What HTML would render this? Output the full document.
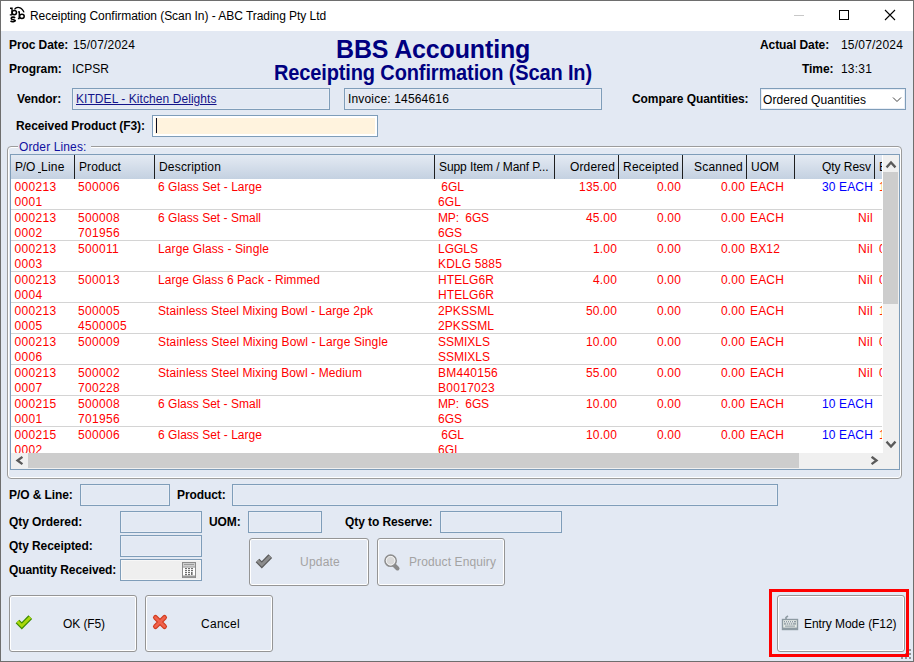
<!DOCTYPE html>
<html><head><meta charset="utf-8"><title>Receipting Confirmation</title><style>
*{margin:0;padding:0;box-sizing:border-box}
html,body{width:914px;height:662px;overflow:hidden;background:#e3e9f3}
body{position:relative;font-family:"Liberation Sans",sans-serif;font-size:12px;color:#000}
.a{position:absolute}
.t{position:absolute;white-space:nowrap;font-size:12px;line-height:14px}
.b{font-weight:bold}
.fld{position:absolute;border:1px solid #7f9db9;background:#e3e9f3;box-shadow:inset 0 0 0 1px #e9eef6}
.btn{position:absolute;border:1px solid #959595;border-radius:3px;box-shadow:inset 0 0 0 1px #fff;background:#e3e9f3}
.r{color:#ff0000}
.bl{color:#0000ff}
.o{color:#ff2a00}
</style></head><body>
<div class="a" style="left:0;top:0;width:914px;height:662px;border:1px solid #6e6e6e"></div>
<div class="a" style="left:1px;top:1px;width:912px;height:30px;background:#fff"></div>
<svg class="a" style="left:0;top:0" width="30" height="30" viewBox="0 0 30 30">
<g fill="none" stroke="#000" stroke-width="1.4">
<path d="M10 8.3H12V14.9M9.8 14.9H12.3"/>
<ellipse cx="14.3" cy="12.6" rx="2.2" ry="2.1" stroke-width="1.5"/>
<path d="M18 11.9H19.3V18.5M17.9 18.5H19.6"/>
<ellipse cx="21.9" cy="16.3" rx="2.3" ry="2.1" stroke-width="1.5"/>
<path d="M14.5 9.3C16.5 6.4 21.8 6.4 24 12.4" stroke-width="1.3"/>
<path d="M15 18C14.3 16.8 11.2 16.7 11.2 18.4S15.3 19.4 15.3 20.6 11.8 22.5 10.6 20.8" stroke-width="1.6"/>
</g></svg>
<div class="t" style="left:30px;top:9px;letter-spacing:-0.05px">Receipting Confirmation (Scan In) - ABC Trading Pty Ltd</div>
<div class="a" style="left:794px;top:15px;width:10px;height:1px;background:#c8c8c8"></div>
<div class="a" style="left:839px;top:10px;width:10px;height:10px;border:1px solid #000"></div>
<svg class="a" style="left:884px;top:9px" width="12" height="12" viewBox="0 0 12 12">
<path d="M1 1L11 11M11 1L1 11" stroke="#000" stroke-width="1.1"/></svg>
<div class="t b" style="left:9px;top:38px;letter-spacing:-0.08px;">Proc Date:</div>
<div class="t " style="left:73px;top:38px;letter-spacing:0.194px;">15/07/2024</div>
<div class="t b" style="left:9px;top:62px;letter-spacing:-0.08px;">Program:</div>
<div class="t " style="left:72px;top:62px;letter-spacing:0.065px;">ICPSR</div>
<div class="t b" style="left:336px;top:36px;font-size:25px;line-height:26px;letter-spacing:-0.15px;color:#000080">BBS Accounting</div>
<div class="t b" style="left:274px;top:62px;font-size:20px;line-height:22px;letter-spacing:-0.13px;color:#000080;transform:scaleY(1.07);transform-origin:0 17px">Receipting Confirmation (Scan In)</div>
<div class="t b" style="left:760px;top:38px;letter-spacing:-0.08px;">Actual Date:</div>
<div class="t " style="left:841px;top:38px;letter-spacing:0.194px;">15/07/2024</div>
<div class="t b" style="left:802px;top:62px;letter-spacing:-0.08px;">Time:</div>
<div class="t " style="left:841px;top:62px;letter-spacing:0.194px;">13:31</div>
<div class="t b" style="left:17px;top:92px;letter-spacing:-0.08px;">Vendor:</div>
<div class="fld" style="left:72px;top:88px;width:258px;height:22px"></div>
<div class="t " style="left:76px;top:92px;letter-spacing:0.064px;color:#14148a;text-decoration:underline">KITDEL - Kitchen Delights</div>
<div class="fld" style="left:344px;top:88px;width:258px;height:22px"></div>
<div class="t " style="left:348px;top:92px;letter-spacing:0.172px;">Invoice: 14564616</div>
<div class="t b" style="left:632px;top:92px;letter-spacing:-0.08px;">Compare Quantities:</div>
<div class="fld" style="left:760px;top:88px;width:146px;height:22px;background:#fff"></div>
<div class="t " style="left:763px;top:93px;letter-spacing:0.09px;">Ordered Quantities</div>
<svg class="a" style="left:892px;top:96px" width="10" height="8" viewBox="0 0 10 8">
<path d="M1 1.5l4 4 4-4" fill="none" stroke="#444" stroke-width="1"/></svg>
<div class="t b" style="left:16px;top:119px;letter-spacing:-0.08px;">Received Product (F3):</div>
<div class="fld" style="left:152px;top:115px;width:226px;height:22px;background:#fff3de;box-shadow:inset 0 0 0 2px #fff"></div>
<div class="a" style="left:156px;top:118px;width:1px;height:15px;background:#0a0a20"></div>
<div class="a" style="left:7px;top:146px;width:895px;height:333px;border:1px solid #9c9c9c;border-radius:4px;box-shadow:inset 0 0 0 1px #fff"></div>
<div class="a" style="left:18px;top:140px;width:73px;height:12px;background:#e3e9f3"></div>
<div class="t " style="left:19px;top:140px;letter-spacing:0.081px;color:#1010a0;letter-spacing:0.12px">Order Lines:</div>
<div class="a" style="left:10px;top:154px;width:890px;height:316px;border:1px solid #7f9db9;background:#fff"></div>
<div class="a" style="left:11px;top:155px;width:871px;height:24px;overflow:hidden;background:linear-gradient(#e4eaf3,#c4d1e1)">
<div class="a" style="left:63px;top:0;width:1px;height:24px;background:#1e1e1e"></div>
<div class="t" style="left:4px;top:5px;letter-spacing:-0.224px">P/O</div>
<div class="a" style="left:143px;top:0;width:1px;height:24px;background:#1e1e1e"></div>
<div class="t" style="left:68px;top:5px;letter-spacing:0.092px">Product</div>
<div class="a" style="left:423px;top:0;width:1px;height:24px;background:#1e1e1e"></div>
<div class="t" style="left:148px;top:5px;letter-spacing:0.18px">Description</div>
<div class="a" style="left:543px;top:0;width:1px;height:24px;background:#1e1e1e"></div>
<div class="t" style="left:428px;top:5px;letter-spacing:-0.082px">Supp Item / Manf P...</div>
<div class="a" style="left:607px;top:0;width:1px;height:24px;background:#1e1e1e"></div>
<div class="t" style="left:544px;top:5px;width:60px;text-align:right;letter-spacing:0.14px">Ordered</div>
<div class="a" style="left:671px;top:0;width:1px;height:24px;background:#1e1e1e"></div>
<div class="t" style="left:608px;top:5px;width:60px;text-align:right;letter-spacing:0.218px">Receipted</div>
<div class="a" style="left:735px;top:0;width:1px;height:24px;background:#1e1e1e"></div>
<div class="t" style="left:672px;top:5px;width:60px;text-align:right;letter-spacing:0.232px">Scanned</div>
<div class="a" style="left:783px;top:0;width:1px;height:24px;background:#1e1e1e"></div>
<div class="t" style="left:740px;top:5px;letter-spacing:0.001px">UOM</div>
<div class="a" style="left:863px;top:0;width:1px;height:24px;background:#1e1e1e"></div>
<div class="t" style="left:784px;top:5px;width:76px;text-align:right;letter-spacing:-0.043px">Qty Resv</div>
<div class="a" style="left:943px;top:0;width:1px;height:24px;background:#1e1e1e"></div>
<div class="t" style="left:868px;top:5px;letter-spacing:0.234px">Balance</div>
<div class="a" style="left:27px;top:17px;width:3px;height:1px;background:#111"></div>
<div class="t" style="left:30px;top:5px;letter-spacing:0.25px">Line</div>
</div>
<div class="a" style="left:11px;top:179px;width:871px;height:274px;overflow:hidden">
<div class="t r" style="left:3.5px;top:1px;letter-spacing:0.326px">000213</div>
<div class="t r" style="left:3.5px;top:16px;letter-spacing:0.326px">0001</div>
<div class="t r" style="left:67px;top:1px;letter-spacing:0.326px">500006</div>
<div class="t r" style="left:147px;top:1px;letter-spacing:0.032px">6 Glass Set - Large</div>
<div class="t r" style="left:427px;top:1px;letter-spacing:-0.004px">&nbsp;6GL</div>
<div class="t r" style="left:427px;top:16px;letter-spacing:0.106px">6GL</div>
<div class="t r" style="left:544px;top:1px;width:62px;text-align:right;letter-spacing:0.216px">135.00</div>
<div class="t r" style="left:608px;top:1px;width:62px;text-align:right;letter-spacing:0.161px">0.00</div>
<div class="t r" style="left:672px;top:1px;width:62px;text-align:right;letter-spacing:0.161px">0.00</div>
<div class="t r" style="left:739px;top:1px;letter-spacing:0.165px">EACH</div>
<div class="t bl" style="left:784px;top:1px;width:78px;text-align:right;letter-spacing:0.14px">30 EACH</div>
<div class="t o" style="left:868px;top:1px;letter-spacing:0.326px">1</div>
<div class="a" style="left:0;top:30px;width:872px;height:1px;background:#d4d4d4"></div>
<div class="t r" style="left:3.5px;top:32px;letter-spacing:0.326px">000213</div>
<div class="t r" style="left:3.5px;top:47px;letter-spacing:0.326px">0002</div>
<div class="t r" style="left:67px;top:32px;letter-spacing:0.326px">500008</div>
<div class="t r" style="left:67px;top:47px;letter-spacing:0.326px">701956</div>
<div class="t r" style="left:147px;top:32px;letter-spacing:0.016px">6 Glass Set - Small</div>
<div class="t r" style="left:427px;top:32px;letter-spacing:-0.127px">MP:&nbsp;&nbsp;6GS</div>
<div class="t r" style="left:427px;top:47px;letter-spacing:-0.004px">6GS</div>
<div class="t r" style="left:544px;top:32px;width:62px;text-align:right;letter-spacing:0.194px">45.00</div>
<div class="t r" style="left:608px;top:32px;width:62px;text-align:right;letter-spacing:0.161px">0.00</div>
<div class="t r" style="left:672px;top:32px;width:62px;text-align:right;letter-spacing:0.161px">0.00</div>
<div class="t r" style="left:739px;top:32px;letter-spacing:0.165px">EACH</div>
<div class="t r" style="left:784px;top:32px;width:78px;text-align:right;letter-spacing:0.334px">Nil</div>
<div class="a" style="left:0;top:61px;width:872px;height:1px;background:#d4d4d4"></div>
<div class="t r" style="left:3.5px;top:63px;letter-spacing:0.326px">000213</div>
<div class="t r" style="left:3.5px;top:78px;letter-spacing:0.326px">0003</div>
<div class="t r" style="left:67px;top:63px;letter-spacing:0.326px">500011</div>
<div class="t r" style="left:147px;top:63px;letter-spacing:0.114px">Large Glass - Single</div>
<div class="t r" style="left:427px;top:63px;letter-spacing:-0.004px">LGGLS</div>
<div class="t r" style="left:427px;top:78px;letter-spacing:0.144px">KDLG 5885</div>
<div class="t r" style="left:544px;top:63px;width:62px;text-align:right;letter-spacing:0.161px">1.00</div>
<div class="t r" style="left:608px;top:63px;width:62px;text-align:right;letter-spacing:0.161px">0.00</div>
<div class="t r" style="left:672px;top:63px;width:62px;text-align:right;letter-spacing:0.161px">0.00</div>
<div class="t r" style="left:739px;top:63px;letter-spacing:0.161px">BX12</div>
<div class="t r" style="left:784px;top:63px;width:78px;text-align:right;letter-spacing:0.334px">Nil</div>
<div class="t r" style="left:868px;top:63px;letter-spacing:0.326px">0</div>
<div class="a" style="left:0;top:92px;width:872px;height:1px;background:#d4d4d4"></div>
<div class="t r" style="left:3.5px;top:94px;letter-spacing:0.326px">000213</div>
<div class="t r" style="left:3.5px;top:109px;letter-spacing:0.326px">0004</div>
<div class="t r" style="left:67px;top:94px;letter-spacing:0.326px">500013</div>
<div class="t r" style="left:147px;top:94px;letter-spacing:0.072px">Large Glass 6 Pack - Rimmed</div>
<div class="t r" style="left:427px;top:94px;letter-spacing:0.093px">HTELG6R</div>
<div class="t r" style="left:427px;top:109px;letter-spacing:0.093px">HTELG6R</div>
<div class="t r" style="left:544px;top:94px;width:62px;text-align:right;letter-spacing:0.161px">4.00</div>
<div class="t r" style="left:608px;top:94px;width:62px;text-align:right;letter-spacing:0.161px">0.00</div>
<div class="t r" style="left:672px;top:94px;width:62px;text-align:right;letter-spacing:0.161px">0.00</div>
<div class="t r" style="left:739px;top:94px;letter-spacing:0.165px">EACH</div>
<div class="t r" style="left:784px;top:94px;width:78px;text-align:right;letter-spacing:0.334px">Nil</div>
<div class="t r" style="left:868px;top:94px;letter-spacing:0.326px">0</div>
<div class="a" style="left:0;top:123px;width:872px;height:1px;background:#d4d4d4"></div>
<div class="t r" style="left:3.5px;top:125px;letter-spacing:0.326px">000213</div>
<div class="t r" style="left:3.5px;top:140px;letter-spacing:0.326px">0005</div>
<div class="t r" style="left:67px;top:125px;letter-spacing:0.326px">500005</div>
<div class="t r" style="left:67px;top:140px;letter-spacing:0.326px">4500005</div>
<div class="t r" style="left:147px;top:125px;letter-spacing:0.109px">Stainless Steel Mixing Bowl - Large 2pk</div>
<div class="t r" style="left:427px;top:125px;letter-spacing:0.092px">2PKSSML</div>
<div class="t r" style="left:427px;top:140px;letter-spacing:0.092px">2PKSSML</div>
<div class="t r" style="left:544px;top:125px;width:62px;text-align:right;letter-spacing:0.194px">50.00</div>
<div class="t r" style="left:608px;top:125px;width:62px;text-align:right;letter-spacing:0.161px">0.00</div>
<div class="t r" style="left:672px;top:125px;width:62px;text-align:right;letter-spacing:0.161px">0.00</div>
<div class="t r" style="left:739px;top:125px;letter-spacing:0.165px">EACH</div>
<div class="t r" style="left:784px;top:125px;width:78px;text-align:right;letter-spacing:0.334px">Nil</div>
<div class="t o" style="left:868px;top:125px;letter-spacing:0.326px">1</div>
<div class="a" style="left:0;top:154px;width:872px;height:1px;background:#d4d4d4"></div>
<div class="t r" style="left:3.5px;top:156px;letter-spacing:0.326px">000213</div>
<div class="t r" style="left:3.5px;top:171px;letter-spacing:0.326px">0006</div>
<div class="t r" style="left:67px;top:156px;letter-spacing:0.326px">500009</div>
<div class="t r" style="left:147px;top:156px;letter-spacing:0.124px">Stainless Steel Mixing Bowl - Large Single</div>
<div class="t r" style="left:427px;top:156px;letter-spacing:-0.003px">SSMIXLS</div>
<div class="t r" style="left:427px;top:171px;letter-spacing:-0.003px">SSMIXLS</div>
<div class="t r" style="left:544px;top:156px;width:62px;text-align:right;letter-spacing:0.194px">10.00</div>
<div class="t r" style="left:608px;top:156px;width:62px;text-align:right;letter-spacing:0.161px">0.00</div>
<div class="t r" style="left:672px;top:156px;width:62px;text-align:right;letter-spacing:0.161px">0.00</div>
<div class="t r" style="left:739px;top:156px;letter-spacing:0.165px">EACH</div>
<div class="t r" style="left:784px;top:156px;width:78px;text-align:right;letter-spacing:0.334px">Nil</div>
<div class="t r" style="left:868px;top:156px;letter-spacing:0.326px">0</div>
<div class="a" style="left:0;top:185px;width:872px;height:1px;background:#d4d4d4"></div>
<div class="t r" style="left:3.5px;top:187px;letter-spacing:0.326px">000213</div>
<div class="t r" style="left:3.5px;top:202px;letter-spacing:0.326px">0007</div>
<div class="t r" style="left:67px;top:187px;letter-spacing:0.326px">500002</div>
<div class="t r" style="left:67px;top:202px;letter-spacing:0.326px">700228</div>
<div class="t r" style="left:147px;top:187px;letter-spacing:0.109px">Stainless Steel Mixing Bowl - Medium</div>
<div class="t r" style="left:427px;top:187px;letter-spacing:0.245px">BM440156</div>
<div class="t r" style="left:427px;top:202px;letter-spacing:0.285px">B0017023</div>
<div class="t r" style="left:544px;top:187px;width:62px;text-align:right;letter-spacing:0.194px">55.00</div>
<div class="t r" style="left:608px;top:187px;width:62px;text-align:right;letter-spacing:0.161px">0.00</div>
<div class="t r" style="left:672px;top:187px;width:62px;text-align:right;letter-spacing:0.161px">0.00</div>
<div class="t r" style="left:739px;top:187px;letter-spacing:0.165px">EACH</div>
<div class="t r" style="left:784px;top:187px;width:78px;text-align:right;letter-spacing:0.334px">Nil</div>
<div class="t r" style="left:868px;top:187px;letter-spacing:0.326px">0</div>
<div class="a" style="left:0;top:216px;width:872px;height:1px;background:#d4d4d4"></div>
<div class="t r" style="left:3.5px;top:218px;letter-spacing:0.326px">000215</div>
<div class="t r" style="left:3.5px;top:233px;letter-spacing:0.326px">0001</div>
<div class="t r" style="left:67px;top:218px;letter-spacing:0.326px">500008</div>
<div class="t r" style="left:67px;top:233px;letter-spacing:0.326px">701956</div>
<div class="t r" style="left:147px;top:218px;letter-spacing:0.016px">6 Glass Set - Small</div>
<div class="t r" style="left:427px;top:218px;letter-spacing:-0.127px">MP:&nbsp;&nbsp;6GS</div>
<div class="t r" style="left:427px;top:233px;letter-spacing:-0.004px">6GS</div>
<div class="t r" style="left:544px;top:218px;width:62px;text-align:right;letter-spacing:0.194px">10.00</div>
<div class="t r" style="left:608px;top:218px;width:62px;text-align:right;letter-spacing:0.161px">0.00</div>
<div class="t r" style="left:672px;top:218px;width:62px;text-align:right;letter-spacing:0.161px">0.00</div>
<div class="t r" style="left:739px;top:218px;letter-spacing:0.165px">EACH</div>
<div class="t bl" style="left:784px;top:218px;width:78px;text-align:right;letter-spacing:0.14px">10 EACH</div>
<div class="a" style="left:0;top:247px;width:872px;height:1px;background:#d4d4d4"></div>
<div class="t r" style="left:3.5px;top:249px;letter-spacing:0.326px">000215</div>
<div class="t r" style="left:3.5px;top:264px;letter-spacing:0.326px">0002</div>
<div class="t r" style="left:67px;top:249px;letter-spacing:0.326px">500006</div>
<div class="t r" style="left:147px;top:249px;letter-spacing:0.032px">6 Glass Set - Large</div>
<div class="t r" style="left:427px;top:249px;letter-spacing:-0.004px">&nbsp;6GL</div>
<div class="t r" style="left:427px;top:264px;letter-spacing:0.106px">6GL</div>
<div class="t r" style="left:544px;top:249px;width:62px;text-align:right;letter-spacing:0.194px">10.00</div>
<div class="t r" style="left:608px;top:249px;width:62px;text-align:right;letter-spacing:0.161px">0.00</div>
<div class="t r" style="left:672px;top:249px;width:62px;text-align:right;letter-spacing:0.161px">0.00</div>
<div class="t r" style="left:739px;top:249px;letter-spacing:0.165px">EACH</div>
<div class="t bl" style="left:784px;top:249px;width:78px;text-align:right;letter-spacing:0.14px">10 EACH</div>
<div class="t o" style="left:868px;top:249px;letter-spacing:0.326px">1</div>
<div class="a" style="left:0;top:278px;width:872px;height:1px;background:#d4d4d4"></div>
</div>
<div class="a" style="left:883px;top:155px;width:16px;height:314px;background:#f0f0f0"></div>
<div class="a" style="left:883px;top:172px;width:15px;height:132px;background:#cdcdcd"></div>
<svg class="a" style="left:880px;top:155px" width="20" height="14" viewBox="0 0 20 14">
<path d="M7.3 11.5L11 7.5 14.7 11.5" fill="none" stroke="#5a5a5a" stroke-width="2.3" stroke-linecap="square"/></svg>
<svg class="a" style="left:880px;top:436px" width="20" height="14" viewBox="0 0 20 14">
<path d="M7.3 6.5L11 10.5 14.7 6.5" fill="none" stroke="#5a5a5a" stroke-width="2.3" stroke-linecap="square"/></svg>
<div class="a" style="left:11px;top:453px;width:872px;height:16px;background:#f0f0f0"></div>
<div class="a" style="left:28px;top:453px;width:771px;height:15px;background:#cdcdcd"></div>
<svg class="a" style="left:10px;top:450px" width="20" height="20" viewBox="0 0 20 20">
<path d="M11.5 7.5L7.5 10.5 11.5 13.5" fill="none" stroke="#5a5a5a" stroke-width="2.3" stroke-linecap="square"/></svg>
<svg class="a" style="left:866px;top:450px" width="20" height="20" viewBox="0 0 20 20">
<path d="M6.5 7.5L10.5 10.5 6.5 13.5" fill="none" stroke="#5a5a5a" stroke-width="2.3" stroke-linecap="square"/></svg>
<div class="t b" style="left:9px;top:488px;letter-spacing:-0.08px;">P/O &amp; Line:</div>
<div class="fld" style="left:80px;top:484px;width:90px;height:22px"></div>
<div class="t b" style="left:177px;top:488px;letter-spacing:-0.08px;">Product:</div>
<div class="fld" style="left:232px;top:484px;width:546px;height:22px"></div>
<div class="t b" style="left:9px;top:515px;letter-spacing:-0.08px;">Qty Ordered:</div>
<div class="fld" style="left:120px;top:511px;width:82px;height:22px"></div>
<div class="t b" style="left:209px;top:515px;letter-spacing:-0.08px;">UOM:</div>
<div class="fld" style="left:248px;top:511px;width:74px;height:22px"></div>
<div class="t b" style="left:345px;top:515px;letter-spacing:-0.08px;">Qty to Reserve:</div>
<div class="fld" style="left:440px;top:511px;width:122px;height:22px"></div>
<div class="t b" style="left:9px;top:539px;letter-spacing:-0.08px;">Qty Receipted:</div>
<div class="fld" style="left:120px;top:535px;width:82px;height:22px"></div>
<div class="t b" style="left:9px;top:563px;letter-spacing:-0.08px;">Quantity Received:</div>
<div class="fld" style="left:120px;top:559px;width:82px;height:22px;background:#efefef;box-shadow:inset 0 0 0 1px #f7f7f7"></div>
<svg class="a" style="left:182px;top:562px" width="14" height="16" viewBox="0 0 14 16">
<rect x="0.5" y="0.5" width="13" height="15" fill="#fff" stroke="#8c8c8c"/>
<rect x="1" y="1" width="12" height="3.5" fill="#cfcfcf"/>
<rect x="2" y="2" width="10" height="1" fill="#9a9a9a"/>
<rect x="1" y="4.5" width="12" height="1" fill="#8c8c8c"/>
<rect x="1" y="13.5" width="12" height="2" fill="#9a9a9a"/>
<g fill="#6e6e6e"><rect x="3" y="6" width="2" height="1.2"/><rect x="6" y="6" width="2" height="1.2"/><rect x="9" y="6" width="2" height="1.2"/>
<rect x="3" y="8" width="2" height="1.2"/><rect x="6" y="8" width="2" height="1.2"/><rect x="9" y="8" width="2" height="1.2"/>
<rect x="3" y="10" width="2" height="1.2"/><rect x="6" y="10" width="2" height="1.2"/><rect x="9" y="10" width="1.6" height="3"/>
<rect x="3" y="12" width="2" height="1.2"/><rect x="6" y="12" width="2" height="1.2"/></g></svg>
<div class="btn" style="left:249px;top:538px;width:120px;height:48px"></div>
<svg class="a" style="left:250px;top:547px" width="30" height="28" viewBox="0 0 30 28">
<path d="M7.5 13.5L11.8 17.8L20.3 9.2" fill="none" stroke="#5a5a5a" stroke-width="5.2" stroke-linejoin="miter"/>
<path d="M7.5 13.5L11.8 17.8L20.3 9.2" fill="none" stroke="#8c8c8c" stroke-width="2.8" stroke-linejoin="miter"/></svg>
<div class="t " style="left:300px;top:555px;letter-spacing:0.217px;color:#a3a3a3">Update</div>
<div class="btn" style="left:377px;top:538px;width:128px;height:48px"></div>
<svg class="a" style="left:376px;top:548px" width="30" height="28" viewBox="0 0 30 28">
<path d="M17.5 16.5L21.5 20.5" stroke="#8a8a8a" stroke-width="4" stroke-linecap="round"/>
<circle cx="14.6" cy="12.7" r="5.6" fill="#d9d9d9" stroke="#8e8e8e" stroke-width="1.6"/>
<circle cx="14.6" cy="12.7" r="4.3" fill="none" stroke="#f4f4f4" stroke-width="1"/></svg>
<div class="t " style="left:409px;top:555px;letter-spacing:0.108px;color:#a3a3a3">Product Enquiry</div>
<div class="btn" style="left:9px;top:595px;width:128px;height:57px"></div>
<svg class="a" style="left:10px;top:608px" width="30" height="28" viewBox="0 0 30 28">
<path d="M7.5 13.5L11.8 17.8L20.3 9.2" fill="none" stroke="#3c8c00" stroke-width="5.2" stroke-linejoin="miter"/>
<path d="M7.5 13.5L11.8 17.8L20.3 9.2" fill="none" stroke="#a9d80c" stroke-width="2.8" stroke-linejoin="miter"/></svg>
<div class="t " style="left:63px;top:617px;letter-spacing:-0.095px;">OK (F5)</div>
<div class="btn" style="left:145px;top:595px;width:128px;height:57px"></div>
<svg class="a" style="left:146px;top:608px" width="30" height="28" viewBox="0 0 30 28">
<path d="M9.5 9.5L18.5 18.5M18.5 9.5L9.5 18.5" fill="none" stroke="#d03a1c" stroke-width="5" stroke-linecap="round"/>
<path d="M9.5 9.5L18.5 18.5M18.5 9.5L9.5 18.5" fill="none" stroke="#f0624c" stroke-width="2.8" stroke-linecap="round"/></svg>
<div class="t " style="left:201px;top:617px;letter-spacing:0.274px;">Cancel</div>
<div class="btn" style="left:777px;top:595px;width:128px;height:57px"></div>
<svg class="a" style="left:776px;top:608px" width="30" height="28" viewBox="0 0 30 28">
<rect x="6.5" y="11.5" width="15" height="10" fill="#e6ebe6" stroke="#8d9aa2" stroke-width="1.4"/>
<rect x="6" y="19.6" width="16" height="2.4" fill="#8d9aa2"/>
<g fill="#8d9aa2"><rect x="8" y="13" width="12" height="1.4"/><rect x="8" y="15.2" width="12" height="1.4"/><rect x="9" y="17.6" width="10" height="1"/></g>
<g fill="#fff"><rect x="9" y="13.2" width="1" height="1"/><rect x="11" y="13.2" width="1" height="1"/><rect x="13" y="13.2" width="1" height="1"/><rect x="15" y="13.2" width="1" height="1"/><rect x="17" y="13.2" width="1" height="1"/>
<rect x="10" y="15.4" width="1" height="1"/><rect x="12" y="15.4" width="1" height="1"/><rect x="14" y="15.4" width="1" height="1"/><rect x="16" y="15.4" width="1" height="1"/></g>
<path d="M10 11V9M10 9.3L12 8" stroke="#8d9aa2" stroke-width="1.6"/></svg>
<div class="t " style="left:804px;top:617px;letter-spacing:0.04px;letter-spacing:-0.05px">Entry Mode (F12)</div>
<div class="a" style="left:909px;top:649px;width:2px;height:2px;background:#8f9396"></div>
<div class="a" style="left:905px;top:653px;width:2px;height:2px;background:#8f9396"></div>
<div class="a" style="left:909px;top:653px;width:2px;height:2px;background:#8f9396"></div>
<div class="a" style="left:901px;top:657px;width:2px;height:2px;background:#8f9396"></div>
<div class="a" style="left:905px;top:657px;width:2px;height:2px;background:#8f9396"></div>
<div class="a" style="left:909px;top:657px;width:2px;height:2px;background:#8f9396"></div>
<div class="a" style="left:769px;top:589px;width:140px;height:68px;border:3px solid #ff0000"></div>
</body></html>
